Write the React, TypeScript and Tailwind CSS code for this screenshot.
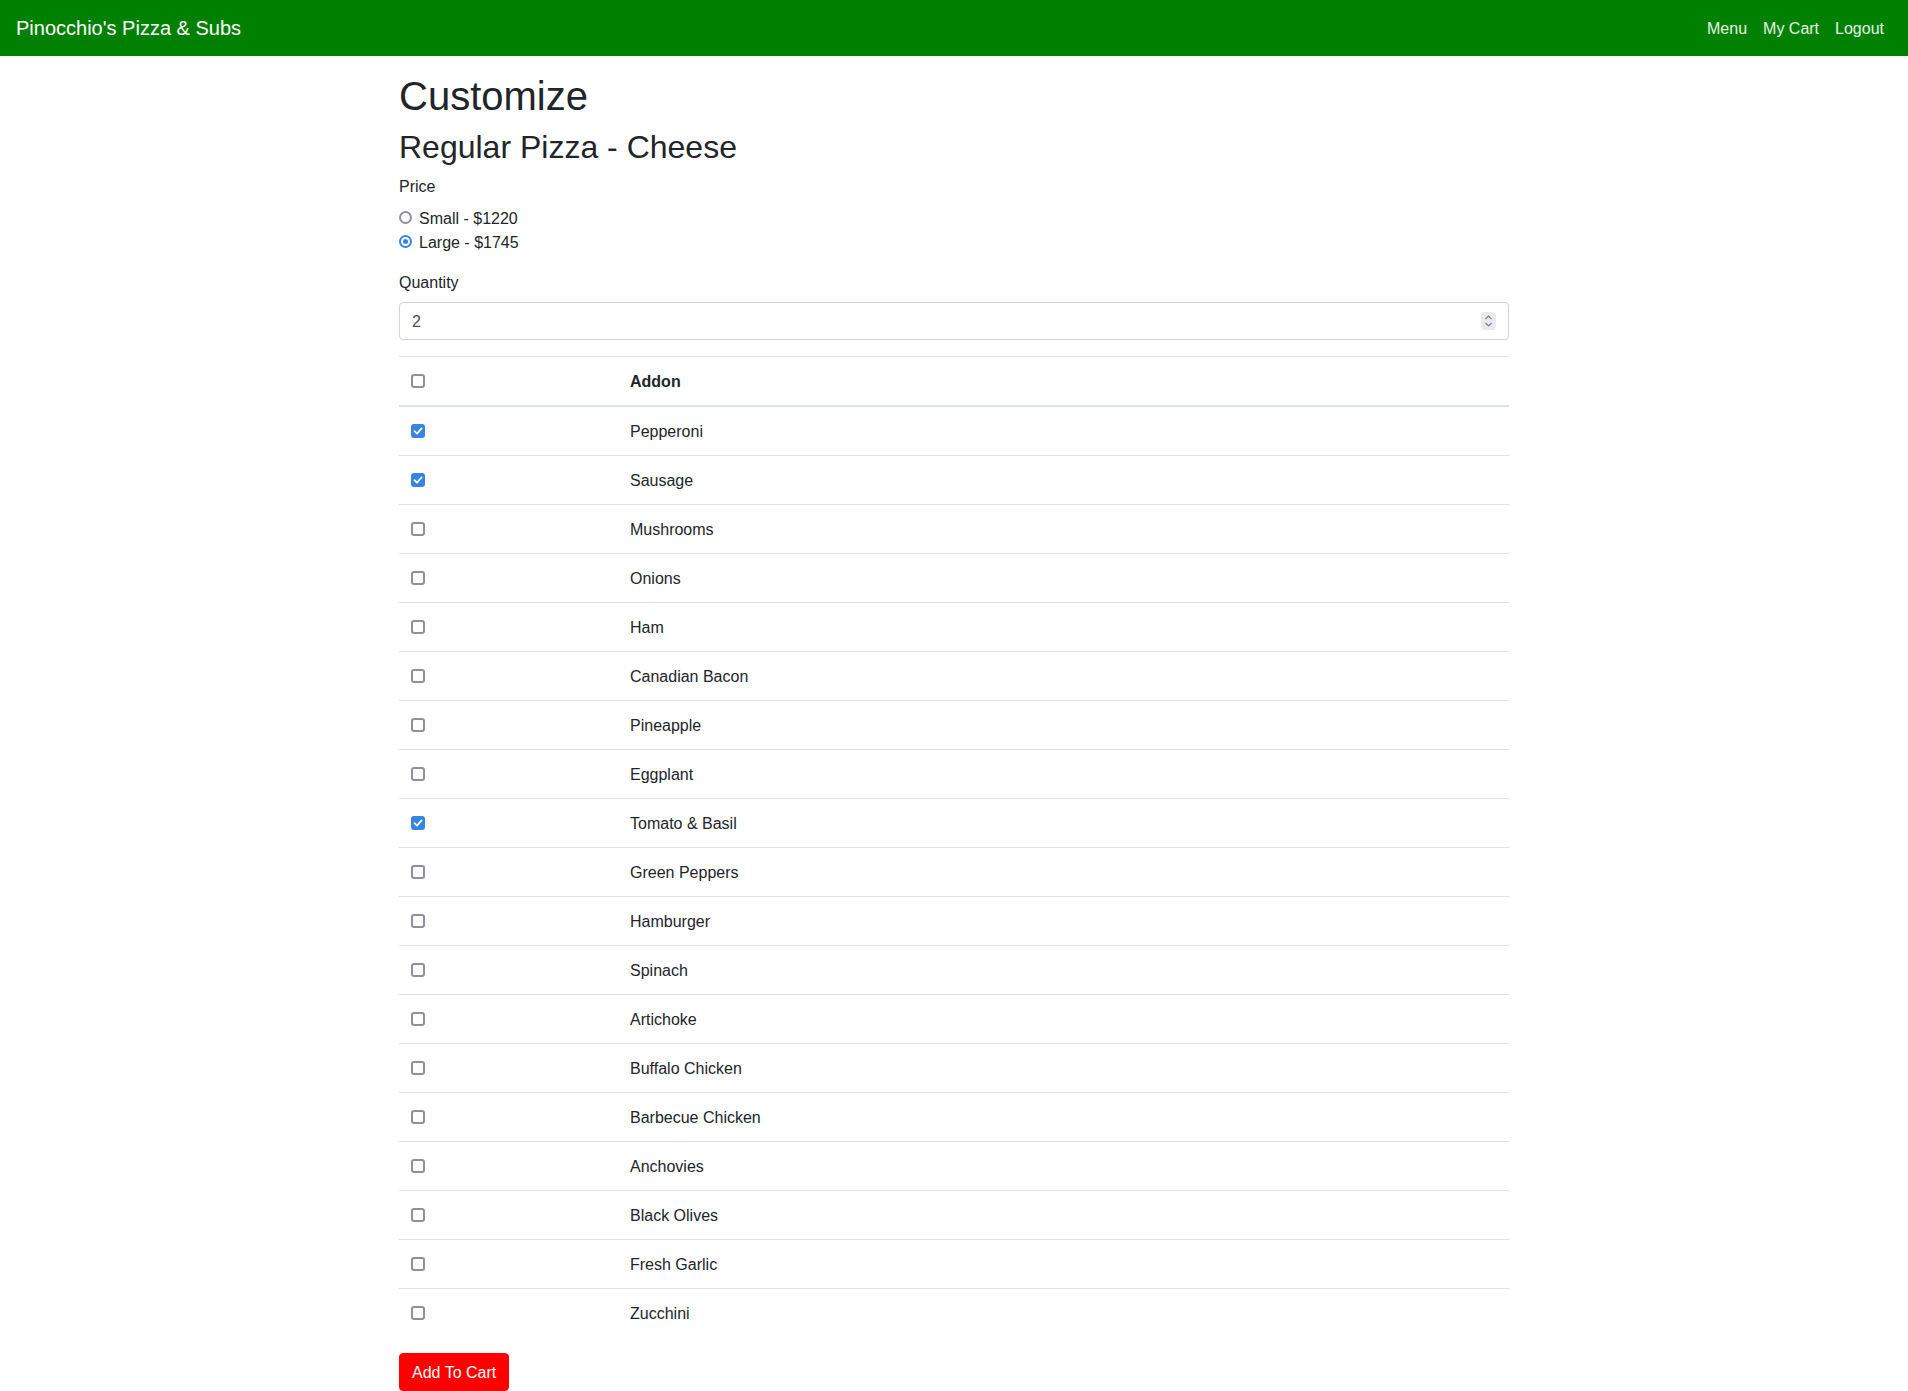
import React from "react";

const addons = [
  { name: "Pepperoni", checked: true },
  { name: "Sausage", checked: true },
  { name: "Mushrooms", checked: false },
  { name: "Onions", checked: false },
  { name: "Ham", checked: false },
  { name: "Canadian Bacon", checked: false },
  { name: "Pineapple", checked: false },
  { name: "Eggplant", checked: false },
  { name: "Tomato & Basil", checked: true },
  { name: "Green Peppers", checked: false },
  { name: "Hamburger", checked: false },
  { name: "Spinach", checked: false },
  { name: "Artichoke", checked: false },
  { name: "Buffalo Chicken", checked: false },
  { name: "Barbecue Chicken", checked: false },
  { name: "Anchovies", checked: false },
  { name: "Black Olives", checked: false },
  { name: "Fresh Garlic", checked: false },
  { name: "Zucchini", checked: false },
];

function Checkbox({ checked }: { checked: boolean }) {
  if (checked) {
    return (
      <span className="flex w-[14px] h-[14px] rounded-[3px] bg-[#3584e4] items-center justify-center">
        <svg width="10" height="10" viewBox="0 0 10 10" fill="none">
          <path d="M1.5 5.2 L4 7.6 L8.6 2.4" stroke="white" strokeWidth="1.8" strokeLinecap="round" strokeLinejoin="round" />
        </svg>
      </span>
    );
  }
  return <span className="block w-[14px] h-[14px] rounded-[3px] border-2 border-[#8f8f9d]" />;
}

function Radio({ checked, label }: { checked: boolean; label: string }) {
  return (
    <div className="flex items-start h-6">
      {checked ? (
        <span className="mt-[5px] w-[13px] h-[13px] rounded-full bg-[#3584e4] flex items-center justify-center">
          <span className="w-[9px] h-[9px] rounded-full bg-white flex items-center justify-center">
            <span className="w-[5px] h-[5px] rounded-full bg-[#3584e4]" />
          </span>
        </span>
      ) : (
        <span className="mt-[5px] w-[13px] h-[13px] rounded-full border-2 border-[#8f8f9d]" />
      )}
      <span className="ml-[7px] pt-px">{label}</span>
    </div>
  );
}

export default function App() {
  return (
    <div className="min-h-screen bg-white text-[#212529] text-base leading-6" style={{ fontFamily: '"Liberation Sans", Arial, sans-serif' }}>
      <nav className="flex items-center justify-between bg-[#008000] px-4 py-2">
        <span className="text-xl leading-[30px] py-[5px] text-white">Pinocchio's Pizza &amp; Subs</span>
        <div className="flex text-white/90">
          <a className="px-2 pt-[9px] pb-[7px]">Menu</a>
          <a className="px-2 pt-[9px] pb-[7px]">My Cart</a>
          <a className="px-2 pt-[9px] pb-[7px]">Logout</a>
        </div>
      </nav>

      <div className="w-[1140px] mx-auto px-[15px] mt-4">
        <h1 className="text-[40px] leading-[48px] mb-2">Customize</h1>
        <h2 className="text-[32px] leading-[38.4px] mb-2">Regular Pizza - Cheese</h2>

        <div className="mb-4">
          <label className="block mb-2 h-6 pt-px">Price</label>
          <Radio checked={false} label="Small - $1220" />
          <Radio checked={true} label="Large - $1745" />
        </div>

        <div className="mb-4">
          <label className="block mb-2 h-6 pt-px">Quantity</label>
          <div className="flex items-center justify-between h-[38px] border border-[#ced4da] rounded px-3 text-[#495057]">
            <span className="pt-px">2</span>
            <span className="flex flex-col items-center justify-center w-[15px] h-[18px] bg-[#e9e9ed] rounded-sm">
              <svg width="9" height="14" viewBox="0 0 9 14" fill="none">
                <path d="M1.5 5 L4.5 2 L7.5 5" stroke="#7b7b85" strokeWidth="1.1" />
                <path d="M1.5 9 L4.5 12 L7.5 9" stroke="#7b7b85" strokeWidth="1.1" />
              </svg>
            </span>
          </div>
        </div>

        <table className="w-full border-collapse mb-4">
          <thead>
            <tr>
              <th className="w-[219px] p-3 text-left border-t border-b-2 border-[#dee2e6] align-middle">
                <Checkbox checked={false} />
              </th>
              <th className="px-3 pt-[13px] pb-[11px] text-left font-bold border-t border-b-2 border-[#dee2e6]">Addon</th>
            </tr>
          </thead>
          <tbody>
            {addons.map((a) => (
              <tr key={a.name}>
                <td className="p-3 border-t border-[#dee2e6] align-middle">
                  <Checkbox checked={a.checked} />
                </td>
                <td className="px-3 pt-[13px] pb-[11px] border-t border-[#dee2e6]">{a.name}</td>
              </tr>
            ))}
          </tbody>
        </table>

        <button className="bg-[#ff0000] border border-[#ff0000] text-white px-3 pt-[7px] pb-[5px] rounded leading-6">Add To Cart</button>
      </div>
    </div>
  );
}
